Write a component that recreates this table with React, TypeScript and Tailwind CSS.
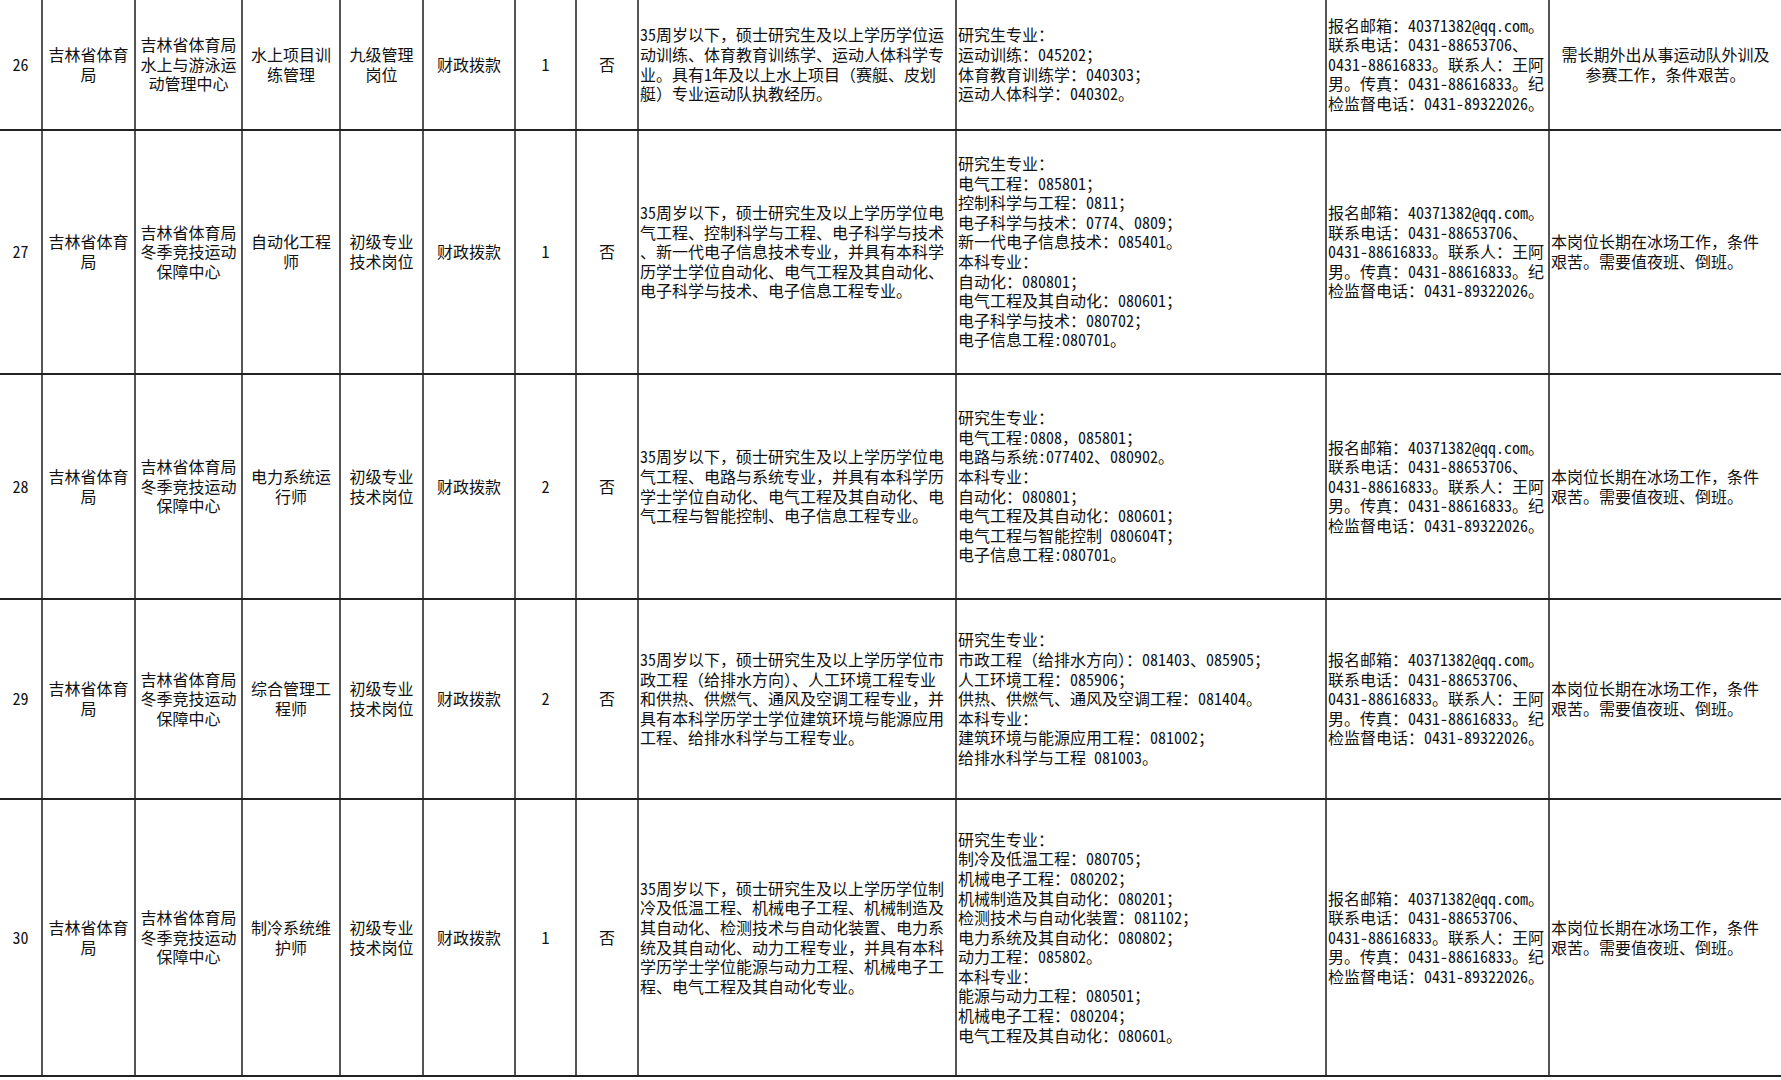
import clsx from 'clsx';

// 岗位信息表（第26-30行）
const COLS = 'grid-cols-[43px_93px_107px_98px_83px_92px_61px_62px_318px_370px_223px_231px]';

const CONTACT = [
  '报名邮箱：40371382@qq.com。',
  '联系电话：0431-88653706、',
  '0431-88616833。联系人：王阿',
  '男。传真：0431-88616833。纪',
  '检监督电话：0431-89322026。',
];

const ICE_NOTE = ['本岗位长期在冰场工作，条件', '艰苦。需要值夜班、倒班。'];

type Row = {
  no: string;
  h: string;
  unit: string[];
  post: string[];
  level: string[];
  count: string;
  req: string[];
  major: string[];
  note: string[];
  noteCenter?: boolean;
};

const WINTER = ['吉林省体育局', '冬季竞技运动', '保障中心'];
const JUNIOR = ['初级专业', '技术岗位'];

const rows: Row[] = [
  {
    no: '26',
    h: 'h-[131px]',
    unit: ['吉林省体育局', '水上与游泳运', '动管理中心'],
    post: ['水上项目训', '练管理'],
    level: ['九级管理', '岗位'],
    count: '1',
    req: [
      '35周岁以下，硕士研究生及以上学历学位运',
      '动训练、体育教育训练学、运动人体科学专',
      '业。具有1年及以上水上项目（赛艇、皮划',
      '艇）专业运动队执教经历。',
    ],
    major: ['研究生专业：', '运动训练：045202；', '体育教育训练学：040303；', '运动人体科学：040302。'],
    note: ['需长期外出从事运动队外训及', '参赛工作，条件艰苦。'],
    noteCenter: true,
  },
  {
    no: '27',
    h: 'h-[244px]',
    unit: WINTER,
    post: ['自动化工程', '师'],
    level: JUNIOR,
    count: '1',
    req: [
      '35周岁以下，硕士研究生及以上学历学位电',
      '气工程、控制科学与工程、电子科学与技术',
      '、新一代电子信息技术专业，并具有本科学',
      '历学士学位自动化、电气工程及其自动化、',
      '电子科学与技术、电子信息工程专业。',
    ],
    major: [
      '研究生专业：',
      '电气工程：085801；',
      '控制科学与工程：0811；',
      '电子科学与技术：0774、0809；',
      '新一代电子信息技术：085401。',
      '本科专业：',
      '自动化：080801；',
      '电气工程及其自动化：080601；',
      '电子科学与技术：080702；',
      '电子信息工程:080701。',
    ],
    note: ICE_NOTE,
  },
  {
    no: '28',
    h: 'h-[225px]',
    unit: WINTER,
    post: ['电力系统运', '行师'],
    level: JUNIOR,
    count: '2',
    req: [
      '35周岁以下，硕士研究生及以上学历学位电',
      '气工程、电路与系统专业，并具有本科学历',
      '学士学位自动化、电气工程及其自动化、电',
      '气工程与智能控制、电子信息工程专业。',
    ],
    major: [
      '研究生专业：',
      '电气工程:0808，085801；',
      '电路与系统:077402、080902。',
      '本科专业：',
      '自动化：080801；',
      '电气工程及其自动化：080601；',
      '电气工程与智能控制 080604T；',
      '电子信息工程:080701。',
    ],
    note: ICE_NOTE,
  },
  {
    no: '29',
    h: 'h-[200px]',
    unit: WINTER,
    post: ['综合管理工', '程师'],
    level: JUNIOR,
    count: '2',
    req: [
      '35周岁以下，硕士研究生及以上学历学位市',
      '政工程（给排水方向）、人工环境工程专业',
      '和供热、供燃气、通风及空调工程专业，并',
      '具有本科学历学士学位建筑环境与能源应用',
      '工程、给排水科学与工程专业。',
    ],
    major: [
      '研究生专业：',
      '市政工程（给排水方向）：081403、085905；',
      '人工环境工程：085906；',
      '供热、供燃气、通风及空调工程：081404。',
      '本科专业：',
      '建筑环境与能源应用工程：081002；',
      '给排水科学与工程 081003。',
    ],
    note: ICE_NOTE,
  },
  {
    no: '30',
    h: 'h-[277px]',
    unit: WINTER,
    post: ['制冷系统维', '护师'],
    level: JUNIOR,
    count: '1',
    req: [
      '35周岁以下，硕士研究生及以上学历学位制',
      '冷及低温工程、机械电子工程、机械制造及',
      '其自动化、检测技术与自动化装置、电力系',
      '统及其自动化、动力工程专业，并具有本科',
      '学历学士学位能源与动力工程、机械电子工',
      '程、电气工程及其自动化专业。',
    ],
    major: [
      '研究生专业：',
      '制冷及低温工程：080705；',
      '机械电子工程：080202；',
      '机械制造及其自动化：080201；',
      '检测技术与自动化装置：081102；',
      '电力系统及其自动化：080802；',
      '动力工程：085802。',
      '本科专业：',
      '能源与动力工程：080501；',
      '机械电子工程：080204；',
      '电气工程及其自动化：080601。',
    ],
    note: ICE_NOTE,
  },
];

function Cell({ lines, center, last }: { lines: string[]; center?: boolean; last?: boolean }) {
  return (
    <div
      className={clsx(
        'flex flex-col justify-center overflow-hidden',
        !last && 'border-r-2 border-[#555]',
        center ? 'items-center text-center' : 'items-start pl-[1px]'
      )}
    >
      {lines.map((l, i) => (
        <div key={i} className="whitespace-nowrap">
          {l}
        </div>
      ))}
    </div>
  );
}

export default function App() {
  return (
    <div className="min-h-screen w-[1781px] bg-white text-[16px] leading-[19.6px] text-[#111] [font-family:'Noto_Sans_Mono_CJK_SC','Noto_Sans_CJK_SC',sans-serif]">
      {rows.map((r) => (
        <div key={r.no} className={clsx('grid border-b-2 border-[#222]', COLS, r.h)}>
          <Cell lines={[r.no]} center />
          <Cell lines={['吉林省体育', '局']} center />
          <Cell lines={r.unit} center />
          <Cell lines={r.post} center />
          <Cell lines={r.level} center />
          <Cell lines={['财政拨款']} center />
          <Cell lines={[r.count]} center />
          <Cell lines={['否']} center />
          <Cell lines={r.req} />
          <Cell lines={r.major} />
          <Cell lines={CONTACT} />
          <Cell lines={r.note} center={r.noteCenter} last />
        </div>
      ))}
    </div>
  );
}
